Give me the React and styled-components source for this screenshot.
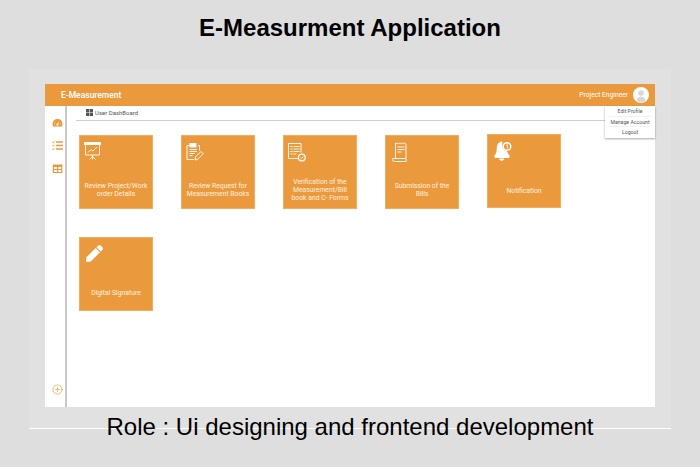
import React from 'react';
import styled, { createGlobalStyle } from 'styled-components';
import { FaPen } from 'react-icons/fa';
import { CirclePlus } from 'lucide-react';

const GlobalStyle = createGlobalStyle`
  html, body {
    margin: 0;
    padding: 0;
    background: #dedede;
  }
  * {
    box-sizing: border-box;
  }
`;

const Page = styled.div`
  width: 700px;
  height: 467px;
  overflow: hidden;
  display: flex;
  flex-direction: column;
  background: #dedede;
  font-family: Roboto, sans-serif;
`;

const Title = styled.h1`
  height: 69px;
  margin: 0;
  padding-top: 15px;
  text-align: center;
  font: bold 24px/26px 'Liberation Sans', Arial, sans-serif;
  color: #000;
`;

const Panel = styled.div`
  width: 642px;
  height: 360px;
  margin-left: 29px;
  padding: 15px 16px 21px;
  background: #e1e1e1;
  border-bottom: 1px solid #fff;
`;

const AppWindow = styled.div`
  position: relative;
  height: 323px;
  display: flex;
  flex-direction: column;
  background: #fff;
`;

const Header = styled.header`
  height: 22px;
  flex: none;
  display: flex;
  align-items: center;
  justify-content: space-between;
  padding: 0 6px 0 16px;
  background: #ea9a3c;
  color: #fff;
`;

const Brand = styled.span`
  font-size: 8.5px;
  font-weight: 500;
`;

const UserBox = styled.div`
  display: flex;
  align-items: center;
  gap: 5px;
  font-size: 6.7px;
`;

const Avatar = styled.svg`
  width: 16px;
  height: 16px;
  display: block;
`;

const Dropdown = styled.ul`
  position: absolute;
  top: 22px;
  right: 0;
  width: 50px;
  height: 32px;
  margin: 0;
  padding: 0 4px;
  list-style: none;
  background: #fff;
  box-shadow: 0 1px 2px rgba(0, 0, 0, 0.35);
`;

const DropdownItem = styled.li`
  height: 10.7px;
  line-height: 10.7px;
  text-align: center;
  white-space: nowrap;
  font-size: 5.2px;
  color: #555;
  border-bottom: ${props => (props.$last ? 'none' : '1px solid #f2f2f2')};
`;

const Body = styled.div`
  flex: 1;
  display: flex;
  min-height: 0;
`;

const Sidebar = styled.nav`
  width: 22px;
  flex: none;
  display: flex;
  flex-direction: column;
  align-items: center;
  padding: 11px 0 12px 4px;
  gap: 12px;
  border-right: 2px solid #c8c8c8;
  color: #ea9a3c;
`;

const SideIcon = styled.svg`
  width: 11px;
  height: 11px;
  display: block;
`;

const SideBottom = styled.div`
  margin-top: auto;
  display: flex;
  color: #ee9a3c;
`;

const Content = styled.main`
  flex: 1;
  min-width: 0;
  padding-left: 9px;
`;

const Breadcrumb = styled.div`
  height: 15px;
  display: flex;
  align-items: center;
  gap: 2px;
  padding: 0 0 1px 10px;
  font-size: 6px;
  color: #555;
  border-bottom: 1px solid #cfcfcf;
`;

const GridIcon = styled.svg`
  width: 7px;
  height: 7px;
  display: block;
`;

const CardGrid = styled.div`
  display: grid;
  grid-template-columns: repeat(5, 74px);
  grid-auto-rows: 74px;
  column-gap: 28px;
  row-gap: 28px;
  padding: 14px 0 0 3px;
`;

const Card = styled.div`
  display: flex;
  flex-direction: column;
  height: 74px;
  padding: 6px 4px 0 4px;
  margin-top: ${props => (props.$raised ? '-1px' : '0')};
  background: #ea9a3c;
  border: 1px solid #f0ad62;
  color: #fff;
`;

const CardIcon = styled.svg`
  width: 20px;
  height: 20px;
  flex: none;
  display: block;
  fill: none;
  stroke: #fff;
`;

const CardLabel = styled.div`
  flex: 1;
  display: flex;
  align-items: center;
  justify-content: center;
  padding-top: ${props => props.$pad}px;
  text-align: center;
  font-size: 6.8px;
  line-height: 8px;
  color: #fdf0e0;
`;

const PenWrap = styled.div`
  height: 20px;
  flex: none;
  display: flex;
  padding: 1px 0 0 1.5px;
  font-size: 17px;
  color: #fff;
`;

const Role = styled.div`
  margin-top: -16px;
  text-align: center;
  font: 24px/28px 'Liberation Sans', Arial, sans-serif;
  color: #000;
`;

const Presentation = () => (
  <CardIcon viewBox="0 0 20 20" strokeWidth="0.9">
    <rect x="0.5" y="0.5" width="16" height="2" fill="#fff" />
    <path d="M1.5 2.5V13h14V2.500" />
    <path d="M4 10.500l3-3 2 1.500 4-4" />
    <path d="M8.500 13v4.500M8.500 14.500l-3 3M8.500 14.500l3 3" />
  </CardIcon>
);

const Clipboard = () => (
  <CardIcon viewBox="0 0 20 20" strokeWidth="0.9">
    <path d="M4 3.500H1v14h7M12 3.500h1.500v5" />
    <rect x="4" y="1.500" width="6" height="3.500" fill="#fff" />
    <path d="M3.500 7.500h7.500M3.500 9.500h7.500M3.500 11.500h5M3.500 13.500h3" />
    <path d="M9 18l.5-3 5.500-5.500 2.300 2.300-5.500 5.500z" />
  </CardIcon>
);

const FormCheck = () => (
  <CardIcon viewBox="0 0 20 20" strokeWidth="0.9">
    <path d="M11 16.500H.5V1.500H13v9" />
    <path d="M2.500 4.500h2M5.500 4.500h6M2.500 7h2M5.500 7h6M2.500 9.500h2M5.500 9.500h6M2.500 12h2M5.500 12h3" />
    <circle cx="13.800" cy="15.500" r="3.400" strokeWidth="1.200" />
    <path d="M12.300 15.500l1.100 1.100 2-2.100" />
  </CardIcon>
);

const Receipt = () => (
  <CardIcon viewBox="0 0 20 20" strokeWidth="0.9">
    <path d="M5.500 16V1l1.500 1 1.500-1 1.500 1 1.500-1 1.500 1 1.500-1 1.500 1V16" />
    <path d="M7.500 5h7M7.500 7.500h7M7.500 10h4" />
    <path d="M2.600 16.500h13.500v3H4.500a2 2 0 0 1-1.900-1.900z" />
  </CardIcon>
);

const BellBadge = () => (
  <CardIcon viewBox="0 0 20 20" stroke="none">
    <path
      d="M10 1C6.500 1 5.200 4 5.200 8c0 3.500-1 5-2.200 6.500V16.500h14v-2c-1.200-1.300-2-2.500-2.300-4C11.500 10.500 9 6.500 10 1z"
      fill="#fff"
    />
    <path d="M7.500 18h4.500c-.5 1.700-4 1.700-4.500 0z" fill="#fff" />
    <circle cx="15" cy="5.500" r="3.800" stroke="#fff" strokeWidth="1.400" />
    <path d="M14.400 4.300l1-.5v3.600" stroke="#fff" strokeWidth="0.900" />
  </CardIcon>
);

const cards = [
  { label: <>Review Project/Work<br />order Details</>, icon: <Presentation />, pad: 10 },
  { label: <>Review Request for<br />Measurement Books</>, icon: <Clipboard />, pad: 10 },
  { label: <>Verification of the<br />Measurement/Bill<br />book and C- Forms</>, icon: <FormCheck />, pad: 10 },
  { label: <>Submission of the<br />Bills</>, icon: <Receipt />, pad: 10 },
  { label: 'Notification', icon: <BellBadge />, raised: true, pad: 14 },
  {
    label: 'Digital Signature',
    icon: (
      <PenWrap>
        <FaPen />
      </PenWrap>
    ),
    pad: 12,
  },
];

function App() {
  return (
    <Page>
      <GlobalStyle />
      <Title>E-Measurment Application</Title>
      <Panel>
        <AppWindow>
          <Header>
            <Brand>E-Measurement</Brand>
            <UserBox>
              Project Engineer
              <Avatar viewBox="0 0 16 16">
                <circle cx="8" cy="8" r="8" fill="#fff" />
                <circle cx="8" cy="6" r="2.800" fill="#d8d8d8" />
                <path d="M3.500 14c0-3 2-4.500 4.500-4.500s4.500 1.500 4.500 4.500a8 8 0 0 1-9 0z" fill="#d8d8d8" />
              </Avatar>
            </UserBox>
          </Header>
          <Dropdown>
            <DropdownItem>Edit Profile</DropdownItem>
            <DropdownItem>Manage Account</DropdownItem>
            <DropdownItem $last>Logout</DropdownItem>
          </Dropdown>
          <Body>
            <Sidebar>
              <SideIcon viewBox="0 0 11 11">
                <path d="M1 9.500C-.5 5 2 2 5.500 2S11.500 5 10 9.500z" fill="currentColor" />
                <circle cx="5.500" cy="7.600" r="1.100" fill="#fff" />
                <path d="M5.500 7.600l1.200-2.800" stroke="#fff" strokeWidth="0.700" />
                <path d="M2.200 6.800h.9M3.200 4.500l.5.500M8 6.800h.9" stroke="#fff" strokeWidth="0.700" />
              </SideIcon>
              <SideIcon viewBox="0 0 11 11" stroke="currentColor" fill="none">
                <path d="M4 2H11M4 5.500H11M4 9H11" strokeWidth="1.300" />
                <path d="M.3 2l.8.800 1.300-1.500M.3 5.500l.8.800 1.300-1.500M.3 9l.8.800 1.300-1.500" strokeWidth="1" />
              </SideIcon>
              <SideIcon viewBox="0 0 11 11">
                <path
                  fillRule="evenodd"
                  d="M.8 1.500h9.600v8.500H.8zM2 4v2h3V4zM6.200 4v2h3V4zM2 7v2h3V7zM6.200 7v2h3V7z"
                  fill="currentColor"
                />
              </SideIcon>
              <SideBottom>
                <CirclePlus size={11} strokeWidth={1.5} />
              </SideBottom>
            </Sidebar>
            <Content>
              <Breadcrumb>
                <GridIcon viewBox="0 0 7 7">
                  <path d="M0 0h3.200v3.200H0zM3.800 0H7v3.200H3.800zM0 3.800h3.200V7H0zM3.800 3.800H7V7H3.800z" fill="#555" />
                </GridIcon>
                User DashBoard
              </Breadcrumb>
              <CardGrid>
                {cards.map((card, idx) => (
                  <Card key={idx} $raised={card.raised}>
                    {card.icon}
                    <CardLabel $pad={card.pad}>{card.label}</CardLabel>
                  </Card>
                ))}
              </CardGrid>
            </Content>
          </Body>
        </AppWindow>
      </Panel>
      <Role>Role : Ui designing and frontend development</Role>
    </Page>
  );
}

export default App;
